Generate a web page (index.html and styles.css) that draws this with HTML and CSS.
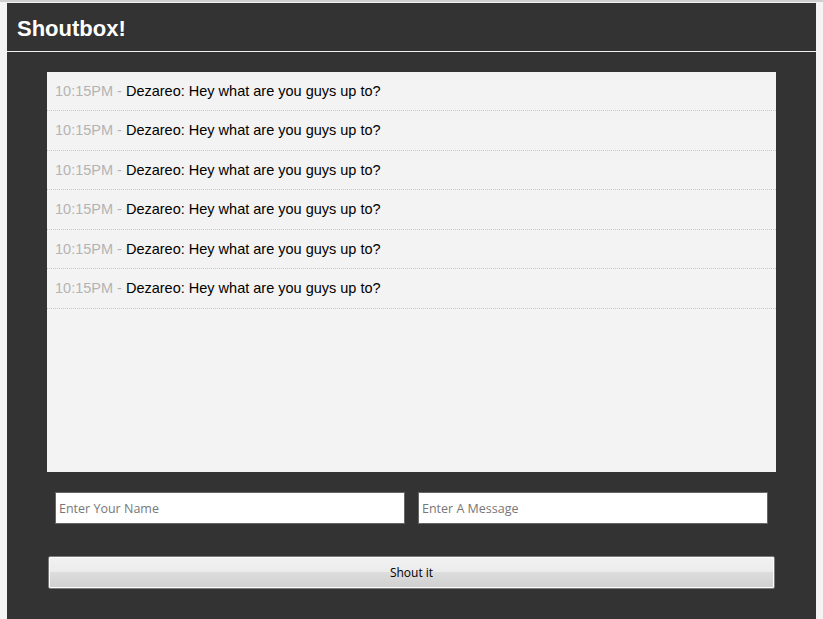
FILE: index.html
```html
<!DOCTYPE html>
<html>
<head>
<meta charset="utf-8">
<link rel="stylesheet" href="styles.css">
</head>
<body>
<div class="app">
  <header class="header"><h1 class="title">Shoutbox!</h1></header>
  <main class="main">
    <ul class="shouts">
      <li class="shout"><span class="time">10:15PM - </span><span class="msg">Dezareo: Hey what are you guys up to?</span></li>
      <li class="shout"><span class="time">10:15PM - </span><span class="msg">Dezareo: Hey what are you guys up to?</span></li>
      <li class="shout"><span class="time">10:15PM - </span><span class="msg">Dezareo: Hey what are you guys up to?</span></li>
      <li class="shout"><span class="time">10:15PM - </span><span class="msg">Dezareo: Hey what are you guys up to?</span></li>
      <li class="shout"><span class="time">10:15PM - </span><span class="msg">Dezareo: Hey what are you guys up to?</span></li>
      <li class="shout"><span class="time">10:15PM - </span><span class="msg">Dezareo: Hey what are you guys up to?</span></li>
    </ul>
    <form class="form">
      <div class="fields">
        <input class="field" type="text" placeholder="Enter Your Name">
        <input class="field" type="text" placeholder="Enter A Message">
      </div>
      <button class="btn" type="button">Shout it</button>
    </form>
  </main>
</div>
</body>
</html>
```
FILE: styles.css
```css
html, body { margin: 0; padding: 0; }
body {
  background: #f4f4f4;
  border-top: 2px solid #cfcfcf;
  padding: 1px 0 0 7px;
  height: 616px;
  overflow: hidden;
  font-family: "Liberation Sans", Arial, sans-serif;
}
.app {
  width: 809px;
  background: #333333;
  min-height: 640px;
}
.header {
  height: 48px;
  border-bottom: 1px solid #f0f0f0;
  display: flex;
  align-items: center;
  padding-left: 10px;
}
.title {
  margin: 0;
  color: #fff;
  font-size: 22px;
  font-weight: bold;
  padding-top: 4px;
}
.main {
  padding: 20px 0 0 40px;
}
.shouts {
  list-style: none;
  margin: 0;
  padding: 0;
  width: 729px;
  height: 400px;
  background: #f3f3f3;
}
.shout {
  height: 38.5px;
  border-bottom: 1px dotted #c8c8c8;
  box-sizing: content-box;
  padding-left: 8px;
  display: flex;
  align-items: center;
  font-size: 14.5px;
  white-space: pre;
}
.shout:first-child { height: 38px; }
.time { color: #b3b3b3; }
.msg { color: #000; }
.form {
  margin-top: 20px;
}
.fields {
  display: flex;
  gap: 13px;
  padding-left: 8px;
}
.field {
  width: 350px;
  height: 32px;
  box-sizing: border-box;
  border: 1px solid #666;
  background: #fff;
  margin: 0;
  padding: 0 3px;
  font-family: "Open Sans", "Noto Sans", sans-serif;
  font-size: 12.5px;
  outline: none;
}
.field::placeholder { color: #777; }
.btn {
  display: block;
  margin: 32px 0 0 1px;
  width: 727px;
  height: 33px;
  border: 1px solid #7a7a7a;
  border-radius: 2px;
  background: linear-gradient(#f2f2f2 0%, #ebebeb 50%, #dddddd 50%, #cfcfcf 100%);
  box-shadow: inset 0 0 0 1px #fcfcfc;
  font-family: "Open Sans", "Noto Sans", sans-serif;
  font-size: 12px;
  color: #000;
  padding: 0;
}
```
